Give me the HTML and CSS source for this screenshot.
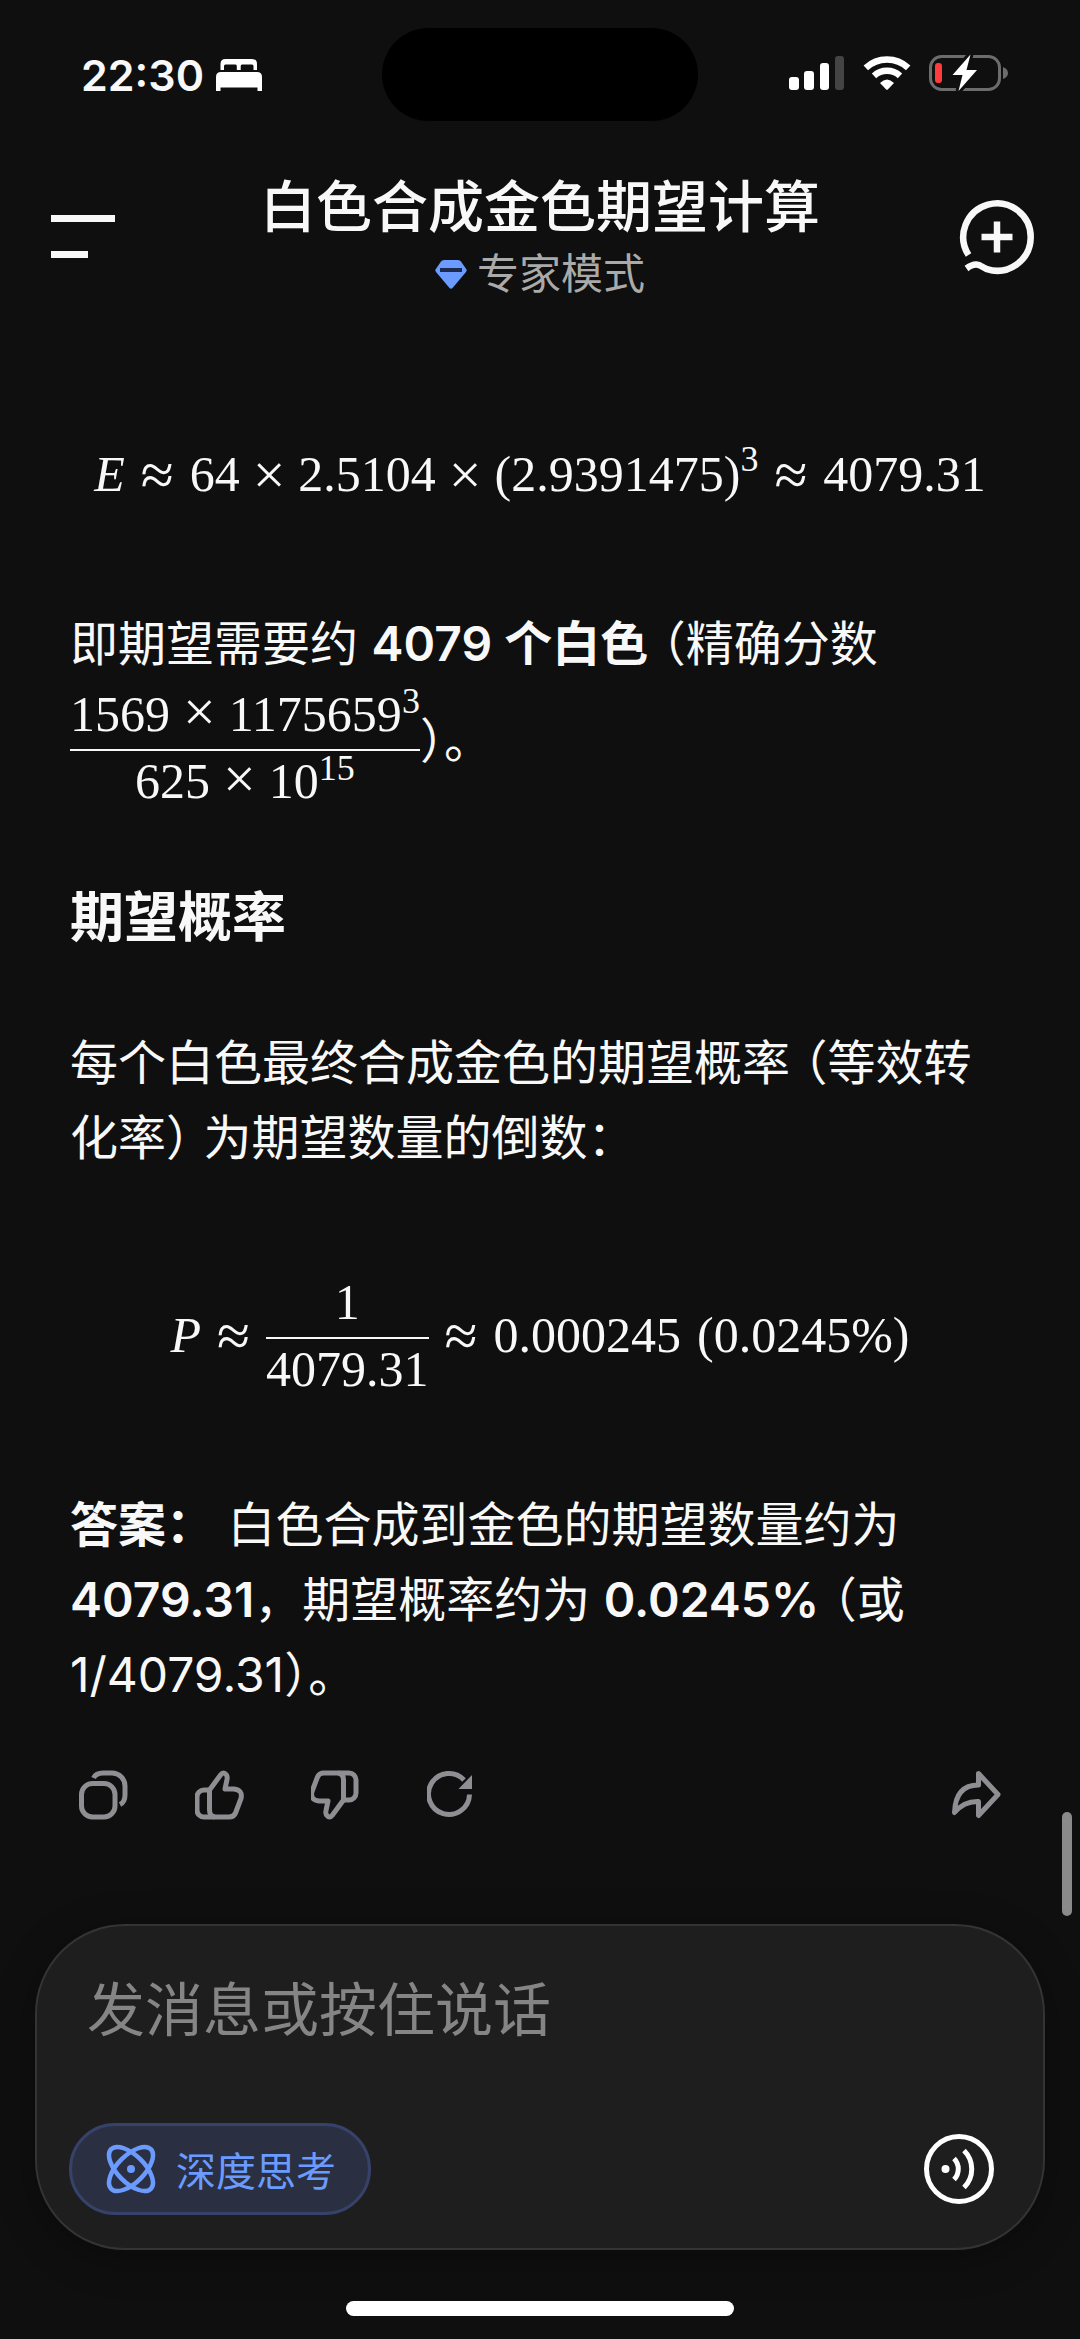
FILE: index.html
```
<!DOCTYPE html>
<html lang="zh-CN">
<head>
  <meta charset="UTF-8">
  <meta name="viewport" content="width=device-width, initial-scale=1.0">
  <title>白色合成金色期望计算</title>
  <link rel="stylesheet" href="styles.css">
</head>
<body>
  <!-- Status bar -->
  <div class="status-bar">
    <div class="status-left">
      <span class="time">22:30</span>
      <svg width="46" height="32" viewBox="0 0 46 32" fill="#fff">
        <path d="M4.500 11V5Q4.500 0 9.500 0H36Q41 0 41 5V11H37.500V7Q37.500 5.500 36 5.500H26Q24.700 5.500 24.700 7V11H20.800V7Q20.800 5.500 19.500 5.500H9.500Q8 5.500 8 7V11Z"/>
        <path d="M0 32V18Q0 13 5 13H41Q46 13 46 18V32H41.500V28.500H4.500V32Z"/>
      </svg>
    </div>
    <div class="island"></div>
    <div class="status-right">
      <svg width="56" height="34" viewBox="0 0 56 34" fill="#fff">
        <rect x="0" y="21" width="10" height="13" rx="3"/>
        <rect x="15" y="15" width="10" height="19" rx="3"/>
        <rect x="31" y="7" width="9" height="27" rx="3"/>
        <rect x="46" y="0" width="9" height="34" rx="3" fill="#444"/>
      </svg>
      <svg width="48" height="36" viewBox="0 0 48 36" fill="none" stroke="#fff" stroke-width="6.500">
        <path d="M2.800 12.800A31 31 0 0 1 45.200 12.800"/>
        <path d="M11 20.800A19.500 19.500 0 0 1 37 20.800"/>
        <path d="M17 28Q24 21 31 28L24.800 34.500Q24 35 23.200 34.500Z" fill="#fff" stroke="none"/>
      </svg>
      <svg width="79" height="38" viewBox="0 0 79 38">
        <rect x="1.500" y="2.500" width="69" height="33" rx="11" fill="none" stroke="#6c6c6c" stroke-width="3"/>
        <path d="M74 13Q79 15 79 19T74 25Z" fill="#6c6c6c"/>
        <rect x="6" y="9" width="7" height="20" rx="3" fill="#ff3b3b"/>
        <path d="M41.500 .5L23.500 21H33.500L29.500 37L48 16H37.500Z" fill="#fff" stroke="#0f0f0f" stroke-width="6" paint-order="stroke"/>
      </svg>
    </div>
  </div>

  <!-- Chat header -->
  <header class="header">
    <button class="icon-button menu" aria-label="菜单">
      <svg width="64" height="44" viewBox="0 0 64 44" fill="#f8f8f8">
        <rect x="0" y="0" width="64" height="7"/>
        <rect x="0" y="36" width="37" height="7"/>
      </svg>
    </button>
    <div class="header-text">
      <h1 class="title">白色合成金色期望计算</h1>
      <div class="mode">
        <svg width="32" height="29" viewBox="0 0 32 29">
          <path d="M6 1.500Q7 0 9 0H23Q25 0 26 1.500L31.500 9.500Q32 10.500 31 12L17.500 28Q16 29.500 14.500 28L1 12Q0 10.500 .5 9.500Z" fill="#6b9bff"/>
          <rect x="5" y="8" width="22" height="4" fill="#1b2a4d"/>
        </svg>
        <span>专家模式</span>
      </div>
    </div>
    <button class="icon-button new-chat" aria-label="新对话">
      <svg width="76" height="76" viewBox="0 0 76 76" fill="none" stroke="#f8f8f8" stroke-width="6.500">
        <path d="M9.500 56A33.700 33.700 0 1 1 28 70.200C21 67 18 62 7.500 69.500"/>
        <path d="M38 22.500V53.500M22.500 38H53.500"/>
      </svg>
    </button>
  </header>

  <!-- Answer -->
  <main class="answer">
    <div class="formula">
      <i>E</i><span class="rel">≈</span>64<span class="op">×</span>2.5104<span class="op">×</span>(2.9391475)<sup>3</sup><span class="rel">≈</span>4079.31
    </div>

    <p>即期望需要约 <strong>4079 个白色</strong> <span class="half">（</span>精确分数<br><span class="frac"><span class="num">1569<span class="op">×</span>1175659<sup>3</sup></span><span class="den">625<span class="op">×</span>10<sup>15</sup></span></span>）。</p>

    <h2>期望概率</h2>

    <p>每个白色最终合成金色的期望概率 <span class="half">（</span>等效转化率<span class="half">）</span> 为期望数量的倒数：</p>

    <div class="formula tall">
      <i>P</i><span class="rel">≈</span><span class="frac"><span class="num">1</span><span class="den">4079.31</span></span><span class="rel">≈</span>0.000245<span class="paren">(0.0245%)</span>
    </div>

    <p><strong>答案：</strong> 白色合成到金色的期望数量约为 <strong>4079.31</strong>，期望概率约为 <strong>0.0245%</strong> <span class="half">（</span>或 1/4079.31）。</p>
  </main>

  <!-- Message actions -->
  <div class="actions">
    <button class="icon-button" aria-label="复制">
      <svg width="50" height="50" viewBox="0 0 50 50">
        <rect x="2.500" y="13.500" width="33.500" height="33.500" rx="11"/>
        <path d="M14.500 8Q17 3 24 3H33A13 13 0 0 1 46 16V25Q46 32 41 34.500"/>
      </svg>
    </button>
    <button class="icon-button" aria-label="喜欢">
      <svg width="50" height="50" viewBox="0 0 50 50">
        <path d="M14.500 20L25.500 5Q28.500 1 31.500 5Q32.600 7 32 9.500L30 19H39Q48 20 46 28.500L40.500 43Q39 47 34 47H21Q14.500 47 14.500 40Z"/>
        <path d="M14.500 20H9A7 7 0 0 0 2 27V40A7 7 0 0 0 9 47H20"/>
      </svg>
    </button>
    <button class="icon-button" aria-label="不喜欢">
      <svg width="50" height="50" viewBox="0 0 50 50">
        <g transform="rotate(180 23.500 25)">
          <path d="M14.500 20L25.500 5Q28.500 1 31.500 5Q32.600 7 32 9.500L30 19H39Q48 20 46 28.500L40.500 43Q39 47 34 47H21Q14.500 47 14.500 40Z"/>
          <path d="M14.500 20H9A7 7 0 0 0 2 27V40A7 7 0 0 0 9 47H20"/>
        </g>
      </svg>
    </button>
    <button class="icon-button" aria-label="重新生成">
      <svg width="50" height="50" viewBox="0 0 50 50">
        <path d="M42.500 24.500A20.500 20.500 0 1 1 37 10"/>
        <path d="M45 5V19H31.500Z" fill="#8e8e93" stroke="none"/>
      </svg>
    </button>
    <button class="icon-button share" aria-label="分享">
      <svg width="50" height="50" viewBox="0 0 50 50">
        <path d="M27.500 3.500L47 24.500L27.500 45.500V31.500Q13 31 3.500 42.500Q4.500 15 27.500 15Z"/>
      </svg>
    </button>
  </div>

  <!-- Message box -->
  <form class="composer">
    <input class="message" type="text" placeholder="发消息或按住说话" aria-label="发消息或按住说话">
    <div class="composer-row">
      <button class="think" type="button">
        <svg width="50" height="50" viewBox="0 0 50 50" fill="none" stroke="#6b9bff" stroke-width="4.500">
          <ellipse cx="25" cy="25" rx="28" ry="13.500" transform="rotate(45 25 25)"/>
          <ellipse cx="25" cy="25" rx="28" ry="13.500" transform="rotate(-45 25 25)"/>
          <circle cx="25" cy="25" r="4" fill="#6b9bff" stroke="none"/>
        </svg>
        <span>深度思考</span>
      </button>
      <button class="icon-button" type="button" aria-label="语音">
        <svg width="72" height="72" viewBox="0 0 72 72" fill="none" stroke="#fff" stroke-width="5">
          <circle cx="36" cy="36" r="32.500"/>
          <circle cx="22.500" cy="36" r="4" fill="#fff" stroke="none"/>
          <path d="M31 25.500A15 15 0 0 1 31 46.500M41 17.500A26 26 0 0 1 41 54.500"/>
        </svg>
      </button>
    </div>
  </form>

  <div class="home-bar"></div>
  <div class="scroll-thumb"></div>
</body>
</html>
```
FILE: styles.css
```
* {
  box-sizing: border-box;
}

body {
  margin: 0;
  min-height: 100vh;
  position: relative;
  display: flex;
  flex-direction: column;
  background-color: #0f0f0f;
  color: #f8f8f8;
  font-family: Inter, "Noto Sans CJK SC", sans-serif;
  font-size: 48px;
  line-height: 75px;
}

svg {
  display: block;
  flex-shrink: 0;
}

.icon-button {
  padding: 0;
  border: none;
  background: none;
  cursor: pointer;
}

/* Status bar */
.status-bar {
  display: grid;
  grid-template-columns: 1fr 316px 1fr;
  align-items: center;
  padding: 28px 72px 0;
}

.status-left {
  display: flex;
  align-items: center;
  gap: 12px;
  padding-left: 9px;
}

.time {
  font-size: 43px;
  font-weight: 600;
  line-height: 56px;
}

.island {
  height: 93px;
  border-radius: 47px;
  background-color: #000;
}

.status-right {
  display: flex;
  align-items: center;
  justify-content: flex-end;
  gap: 18px;
  padding-bottom: 4px;
}

/* Header */
.header {
  display: grid;
  grid-template-columns: 1fr auto 1fr;
  align-items: center;
  padding: 54px 45px 0;
}

.menu {
  justify-self: start;
  padding-left: 6px;
}

.new-chat {
  justify-self: end;
}

.header-text {
  display: flex;
  flex-direction: column;
  align-items: center;
  gap: 10px;
}

.title {
  margin: 0;
  font-size: 56px;
  font-weight: 500;
  line-height: 64px;
}

.mode {
  display: flex;
  align-items: center;
  gap: 10px;
  color: #aaa;
  font-size: 42px;
  line-height: 50px;
}

/* Answer text */
.answer {
  padding: 138px 70px 0;
}

.answer p {
  margin: 0;
}

.answer h2 {
  margin: 73px 0 71px;
  font-size: 54px;
  font-weight: 600;
  line-height: 72px;
}

.answer strong {
  font-weight: 600;
}

/* Half-width brackets inside running text */
.half {
  font-feature-settings: "halt";
}

/* Formulas */
.formula {
  display: flex;
  align-items: center;
  justify-content: center;
  margin-bottom: 94px;
  font-family: "Liberation Serif", serif;
  font-size: 50px;
  line-height: 75px;
}

.formula.tall {
  margin: 99px 0 90px;
}

.op {
  margin: 0 13px;
  font-size: 58px;
  line-height: 56px;
}

.rel {
  margin: 0 16px;
  font-size: 60px;
  line-height: 56px;
}

.frac .op {
  line-height: 0;
}

.paren {
  margin-left: 16px;
}

.answer sup {
  align-self: flex-start;
  font-size: 36px;
  line-height: 0;
  vertical-align: 18px;
}

.formula > sup {
  line-height: 44px;
}

.frac {
  display: inline-flex;
  flex-direction: column;
  align-items: stretch;
  vertical-align: middle;
  text-align: center;
  font-family: "Liberation Serif", serif;
  font-size: 50px;
  line-height: 56px;
}

.answer p .frac {
  margin-top: 5px;
}

.num {
  padding-bottom: 7px;
  border-bottom: 2px solid #f8f8f8;
}

.den {
  padding-top: 2px;
}

/* Message actions */
.actions {
  display: flex;
  gap: 66px;
  padding: 58px 79px 0;
}

.actions svg {
  fill: none;
  stroke: #8e8e93;
  stroke-width: 5;
  stroke-linejoin: round;
}

.share {
  margin-left: auto;
}

/* Message box */
.composer {
  margin: 104px 35px 0;
  padding: 46px 48px 33px 32px;
  border: 2px solid #343434;
  border-radius: 90px;
  background-color: #1e1e1e;
  box-shadow: 0 8px 40px rgba(0, 0, 0, 0.3);
}

.message {
  display: block;
  width: 100%;
  height: 76px;
  padding: 0 18px;
  border: none;
  outline: none;
  background: none;
  color: #f8f8f8;
  font-family: inherit;
  font-size: 58px;
}

.message::placeholder {
  color: #858585;
  opacity: 1;
}

.composer-row {
  display: flex;
  align-items: center;
  justify-content: space-between;
  margin-top: 75px;
}

.think {
  display: flex;
  align-items: center;
  gap: 20px;
  height: 92px;
  padding: 0 32px 0 34px;
  border: 3px solid #36426a;
  border-radius: 46px;
  background-color: #2a3042;
  color: #6b9bff;
  font-family: inherit;
  font-size: 40px;
  cursor: pointer;
}

.home-bar {
  width: 36%;
  height: 15px;
  margin: auto auto 23px;
  border-radius: 8px;
  background-color: #fff;
}

.scroll-thumb {
  position: absolute;
  right: 8px;
  top: 1812px;
  width: 10px;
  height: 104px;
  border-radius: 5px;
  background-color: #8a8a8a;
}
```
